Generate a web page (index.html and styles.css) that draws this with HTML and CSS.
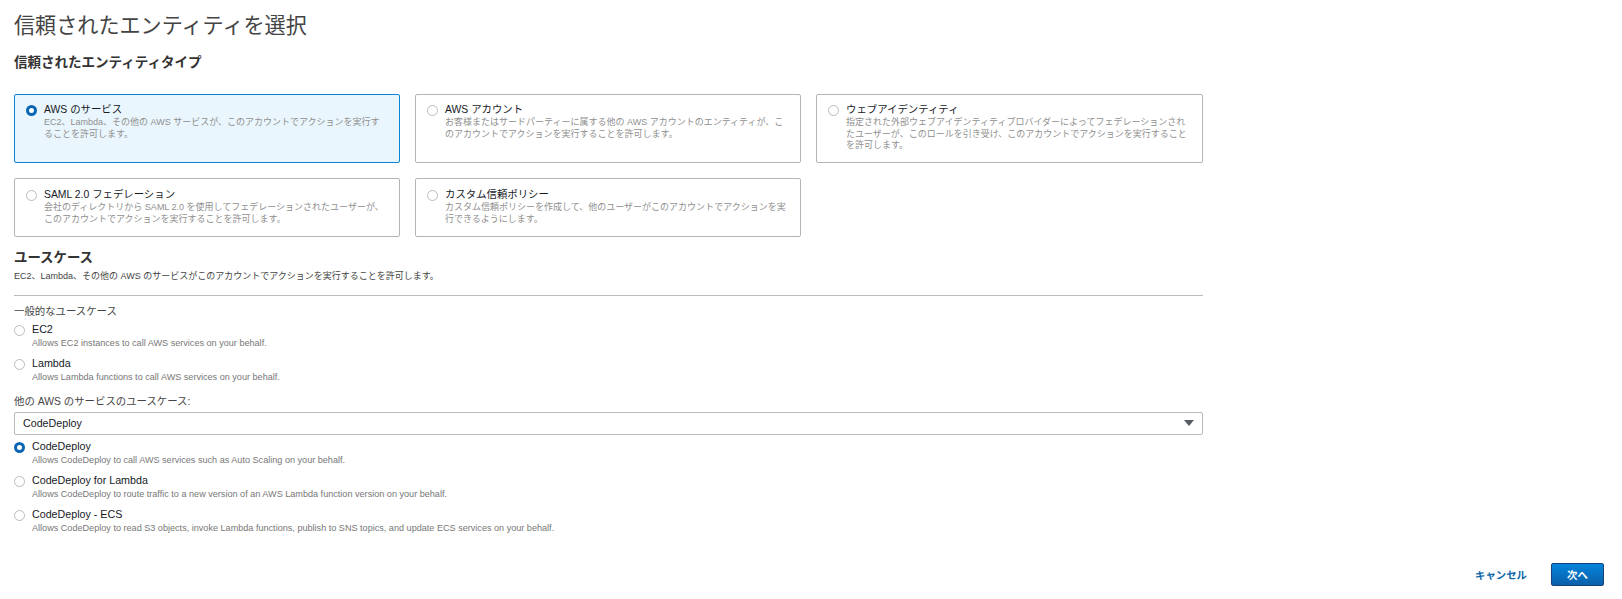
FILE: index.html
```html
<!DOCTYPE html>
<html lang="ja">
<head>
<meta charset="utf-8">
<title>信頼されたエンティティを選択</title>
<link rel="stylesheet" href="styles.css">
</head>
<body>
<main class="page">
  <h1 class="title">信頼されたエンティティを選択</h1>
  <h2 class="section-title">信頼されたエンティティタイプ</h2>
  <div class="cards">
    <div class="card selected">
      <span class="radio checked"></span>
      <div><div class="card-name">AWS のサービス</div><div class="card-desc">EC2、Lambda、その他の AWS サービスが、このアカウントでアクションを実行することを許可します。</div></div>
    </div>
    <div class="card">
      <span class="radio"></span>
      <div><div class="card-name">AWS アカウント</div><div class="card-desc">お客様またはサードパーティーに属する他の AWS アカウントのエンティティが、このアカウントでアクションを実行することを許可します。</div></div>
    </div>
    <div class="card">
      <span class="radio"></span>
      <div><div class="card-name">ウェブアイデンティティ</div><div class="card-desc">指定された外部ウェブアイデンティティプロバイダーによってフェデレーションされたユーザーが、このロールを引き受け、このアカウントでアクションを実行することを許可します。</div></div>
    </div>
    <div class="card lower">
      <span class="radio"></span>
      <div><div class="card-name">SAML 2.0 フェデレーション</div><div class="card-desc">会社のディレクトリから SAML 2.0 を使用してフェデレーションされたユーザーが、このアカウントでアクションを実行することを許可します。</div></div>
    </div>
    <div class="card lower">
      <span class="radio"></span>
      <div><div class="card-name">カスタム信頼ポリシー</div><div class="card-desc">カスタム信頼ポリシーを作成して、他のユーザーがこのアカウントでアクションを実行できるようにします。</div></div>
    </div>
  </div>

  <section class="usecase">
    <h2 class="usecase-title">ユースケース</h2>
    <p class="usecase-sub">EC2、Lambda、その他の AWS のサービスがこのアカウントでアクションを実行することを許可します。</p>
    <hr class="divider">
    <div class="group-label">一般的なユースケース</div>
    <div class="option"><span class="radio"></span><div><div class="opt-name">EC2</div><div class="opt-desc">Allows EC2 instances to call AWS services on your behalf.</div></div></div>
    <div class="option"><span class="radio"></span><div><div class="opt-name">Lambda</div><div class="opt-desc">Allows Lambda functions to call AWS services on your behalf.</div></div></div>
    <div class="group-label other">他の AWS のサービスのユースケース:</div>
    <div class="select"><span>CodeDeploy</span><span class="caret"></span></div>
    <div class="option first"><span class="radio checked"></span><div><div class="opt-name">CodeDeploy</div><div class="opt-desc">Allows CodeDeploy to call AWS services such as Auto Scaling on your behalf.</div></div></div>
    <div class="option"><span class="radio"></span><div><div class="opt-name">CodeDeploy for Lambda</div><div class="opt-desc">Allows CodeDeploy to route traffic to a new version of an AWS Lambda function version on your behalf.</div></div></div>
    <div class="option"><span class="radio"></span><div><div class="opt-name">CodeDeploy - ECS</div><div class="opt-desc">Allows CodeDeploy to read S3 objects, invoke Lambda functions, publish to SNS topics, and update ECS services on your behalf.</div></div></div>
  </section>

  <footer class="actions">
    <a class="cancel">キャンセル</a>
    <button class="next">次へ</button>
  </footer>
</main>
</body>
</html>
```
FILE: styles.css
```css
* { box-sizing: border-box; }
html, body { margin: 0; background: #fff; }
body {
  font-family: "Liberation Sans", "Noto Sans CJK JP", sans-serif;
  color: #16191f;
  height: 599px;
  overflow: hidden;
}
.page { padding: 12px 18px 0 14px; }
.title {
  margin: 0;
  font-size: 21.1px;
  line-height: 28px;
  font-weight: 400;
  color: #444;
}
.section-title {
  margin: 13px 0 0;
  font-size: 13.5px;
  line-height: 20px;
  font-weight: 700;
  color: #333;
}
.cards {
  margin-top: 21px;
  width: 1189px;
  display: grid;
  grid-template-columns: 386px 386px 387px;
  grid-template-rows: 69px 59px;
  column-gap: 15px;
  row-gap: 15px;
}
.card {
  display: flex;
  gap: 7px;
  padding: 8px 13px 0 11px;
  border: 1px solid #b4b4b4;
  border-radius: 2px;
  background: #fff;
}
.card.lower { padding-top: 9px; }
.card.selected {
  border-color: #0a84d6;
  background: #eaf6fd;
}
.radio {
  flex: none;
  width: 11px;
  height: 11px;
  margin-top: 2px;
  border: 1px solid #bbb;
  border-radius: 50%;
  background: #fff;
}
.radio.checked {
  border: 3.5px solid #0a66b5;
  background: #fff;
}
.card-name {
  font-size: 10.4px;
  line-height: 13px;
  color: #16191f;
}
.card-desc {
  font-size: 9px;
  line-height: 11.7px;
  margin-top: 1px;
  color: #8f8f8f;
}
.usecase { width: 1189px; }
.usecase-title {
  margin: 11px 0 0;
  font-size: 13.4px;
  line-height: 20px;
  font-weight: 700;
  color: #333;
}
.usecase-sub {
  margin: 2px 0 0;
  font-size: 9px;
  line-height: 12px;
  color: #444;
}
.divider {
  margin: 13px 0 0;
  border: 0;
  border-top: 1px solid #bbb;
}
.group-label {
  margin-top: 9px;
  font-size: 10.4px;
  line-height: 14px;
  color: #444;
}
.group-label.other { margin-top: 7px; }
.option {
  display: flex;
  gap: 7px;
  height: 34.3px;
  padding-top: 3px;
}
.option .radio { margin-top: 3px; }
.opt-name {
  font-size: 10.7px;
  line-height: 14px;
  color: #16191f;
}
.opt-desc {
  margin-top: 1px;
  font-size: 9.1px;
  line-height: 12px;
  color: #777;
}
.select {
  margin-top: 3px;
  height: 23px;
  display: flex;
  align-items: center;
  justify-content: space-between;
  padding: 0 8px 0 8px;
  border: 1px solid #b9b9b9;
  border-radius: 2px;
  font-size: 10.7px;
  color: #16191f;
}
.caret {
  width: 0;
  height: 0;
  border-left: 5.5px solid transparent;
  border-right: 5.5px solid transparent;
  border-top: 6px solid #545b64;
}
.option.first { margin-top: 1px; }
.actions {
  position: absolute;
  right: 18px;
  top: 563px;
  display: flex;
  align-items: center;
  gap: 24px;
}
.cancel {
  font-size: 10.4px;
  font-weight: 700;
  color: #0a66a8;
}
.next {
  width: 53px;
  height: 23px;
  padding: 0;
  border: 1px solid #15407a;
  border-radius: 2px;
  background: linear-gradient(#0584dc, #0a5fa8);
  color: #fff;
  font: 700 10.4px "Liberation Sans", "Noto Sans CJK JP", sans-serif;
}
```
